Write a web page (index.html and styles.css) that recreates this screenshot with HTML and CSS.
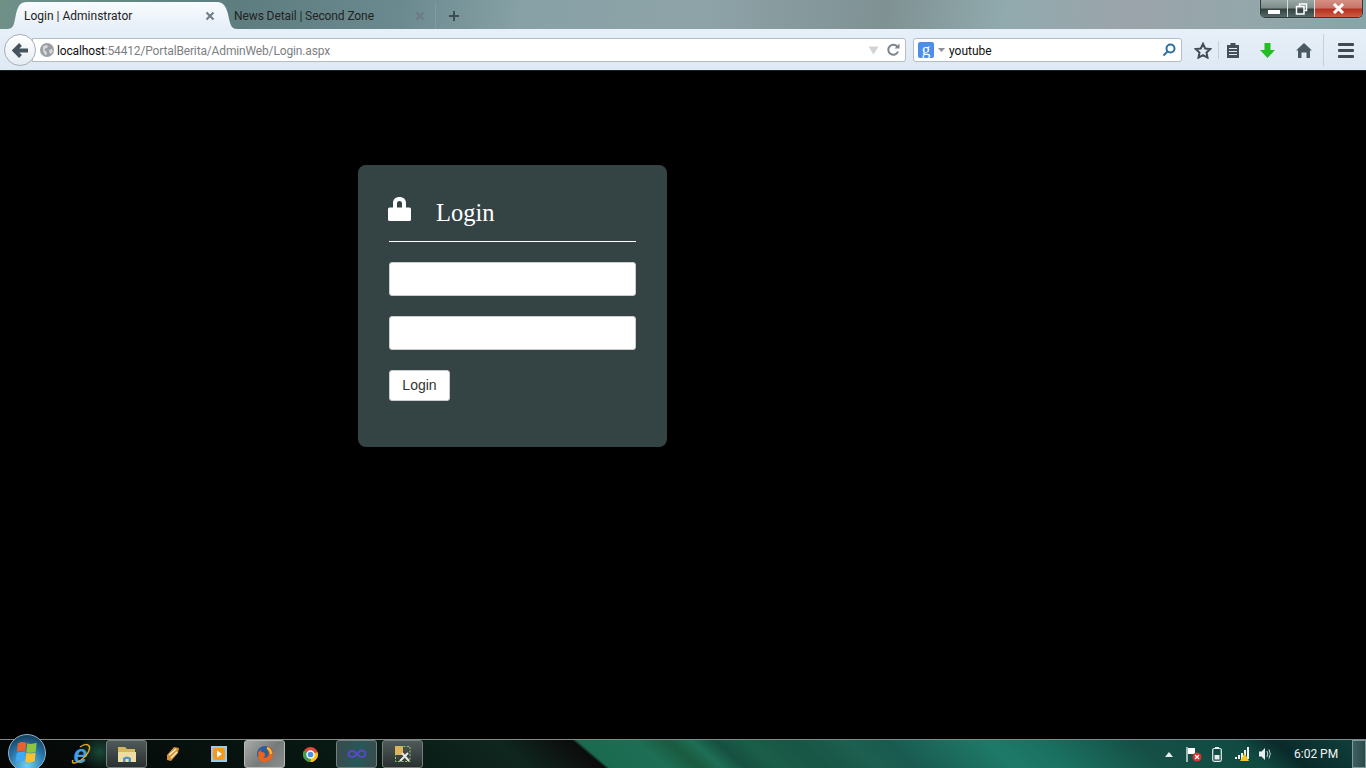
FILE: index.html
```html
<!DOCTYPE html>
<html lang="en">
<head>
  <meta charset="UTF-8" />
  <title>Login | Adminstrator</title>
  <link rel="stylesheet" href="styles.css">
</head>
<body>
<header class="titlebar">
  <div class="tab tab-active">
    <span class="tab-title">Login | Adminstrator</span>
    <svg class="tab-close" width="10" height="10" viewBox="0 0 10 10"><path d="M1.500 1.500l7 7M8.500 1.500l-7 7"/></svg>
  </div>
  <div class="tab tab-back">
    <span class="tab-title">News Detail | Second Zone</span>
    <svg class="tab-close" width="10" height="10" viewBox="0 0 10 10"><path d="M1.500 1.500l7 7M8.500 1.500l-7 7"/></svg>
  </div>
  <div class="new-tab">
    <svg width="12" height="12" viewBox="0 0 12 12"><path d="M6 1v10M1 6h10"/></svg>
  </div>
  <div class="window-controls">
    <div class="win-btn win-min"><span class="min-bar"></span></div>
    <div class="win-btn win-max">
      <svg width="13" height="12" viewBox="0 0 13 12"><path d="M4.500 3V1h7v6.500H9.500M1.500 3.500h7.500v7.500H1.500z"/></svg>
    </div>
    <div class="win-btn win-close">
      <svg width="13" height="11" viewBox="0 0 13 11"><path d="M2 1l9 9M11 1l-9 9"/></svg>
    </div>
  </div>
</header>

<nav class="navbar">
  <div class="back-btn">
    <svg width="17" height="15" viewBox="0 0 17 15"><path d="M8.500 1.500L2.500 7.500l6 6M3 7.500H16"/></svg>
  </div>
  <div class="urlbar">
    <svg class="globe" width="14" height="14" viewBox="0 0 14 14">
      <circle cx="7" cy="7" r="7" fill="#9b9fa3"/>
      <path d="M3 3.500l3-1.500 2 1-1 2-2 .5-.5 2 2 1 .5 3-2 .5-2-4zM9 7l3-1 1 2-2 3-1.500-1z" fill="#d5d8db"/>
    </svg>
    <span class="url-host">localhost</span><span class="url-rest">:54412/PortalBerita/AdminWeb/Login.aspx</span>
    <svg class="url-drop" width="11" height="9" viewBox="0 0 11 9"><path d="M.5.500h10L5.500 8.500z"/></svg>
    <svg class="url-reload" width="14" height="14" viewBox="0 0 14 14"><path d="M11.500 4A5 5 0 1 0 12 8.500"/><path class="fill" d="M8.500 5.500h5V.500z"/></svg>
  </div>
  <div class="searchbar">
    <span class="engine">g</span>
    <svg class="engine-caret" width="7" height="4" viewBox="0 0 7 4"><path d="M0 0h7L3.500 4z"/></svg>
    <span class="search-text">youtube</span>
    <svg class="search-go" width="14" height="14" viewBox="0 0 14 14"><circle cx="8.500" cy="5.500" r="4"/><path d="M5.500 8.500L1.500 12.500"/></svg>
  </div>
  <div class="toolbar">
    <svg class="tool-star" width="18" height="17" viewBox="0 0 18 17"><path d="M9 1.800l2.200 4.700 5 .6-3.700 3.500 1 5L9 13.100l-4.500 2.500 1-5L1.800 7.100l5-.6z"/></svg>
    <span class="tool-sep"></span>
    <svg class="tool-reader" width="14" height="16" viewBox="0 0 14 16"><path class="fill" d="M1 3h3.500V1h5v2H13v13H1z"/><path class="lines" d="M3 6.500h8M3 9.500h8M3 12.500h8"/></svg>
    <svg class="tool-arrow" width="15" height="15" viewBox="0 0 15 15"><path d="M4.500 0h6v7H15l-7.500 8L0 7h4.500z"/></svg>
    <svg class="tool-home" width="16" height="15" viewBox="0 0 16 15"><path d="M8 0l8 7.500h-2V15h-3.500V9.500h-5V15H2V7.500H0z"/></svg>
    <span class="tool-sep tool-sep-tall"></span>
    <div class="tool-menu"><span></span><span></span><span></span></div>
  </div>
</nav>

<main class="page">
  <section class="login-card">
    <div class="login-head">
      <svg class="lock" width="23" height="24" viewBox="0 0 23 24">
        <path d="M1.500 10.500H5V6C5 2 8 0 11.500 0S18 2 18 6v4.500h3.500A1.500 1.500 0 0 1 23 12v10.500a1.500 1.500 0 0 1-1.500 1.500h-20A1.500 1.500 0 0 1 0 22.500V12a1.500 1.500 0 0 1 1.500-1.500zM9 10.500h5V6.500C14 5 13 4 11.500 4S9 5 9 6.500z" fill-rule="evenodd"/>
      </svg>
      <h2>Login</h2>
    </div>
    <form class="login-form">
      <input type="text" />
      <input type="password" />
      <button type="button">Login</button>
    </form>
  </section>
</main>

<footer class="taskbar">
  <div class="start-orb">
    <svg width="22" height="25" viewBox="0 0 24 22" preserveAspectRatio="none">
      <path d="M2 3q4-2 9.200-.5L10.200 10Q5.500 8.500 1 10.500z" fill="#e8602c"/>
      <path d="M12.300 2.800q4 1.500 10.200-.3l-1 7.800q-5 1.800-10.100.2z" fill="#8cc63f"/>
      <path d="M.8 11.500q4.500-2 9.200-.5l-1 7.500q-4.500-1.500-9.200.5z" fill="#3fa9f5"/>
      <path d="M11.200 11.300q4.500 1.500 10.200-.3l-1 7.800q-5 1.800-10.200.2z" fill="#fbc02d"/>
    </svg>
  </div>
  <div class="task-items">
    <div class="task-item task-ie">
      <span class="ie-glyph">e</span>
      <svg class="ie-ring" width="22" height="22" viewBox="0 0 22 22"><path d="M3 17C1 21 5 21 11 17S21 6 19 3 13 2 10 4" fill="none" stroke="#e0a92c" stroke-width="1.500"/></svg>
    </div>
    <div class="task-item task-open">
      <svg width="20" height="18" viewBox="0 0 20 18">
        <path d="M1 2h7l2 2h8v13H1z" fill="#d8b85f"/>
        <path d="M1 7h18v10H1z" fill="#efdca0"/>
        <path d="M6 17v-4q4-3 8 0v4h-2.500v-3h-3v3z" fill="#4d94c9"/>
      </svg>
    </div>
    <div class="task-item">
      <svg width="16" height="16" viewBox="0 0 16 16">
        <path d="M2 9L9 1l5 1-1 5-7 8-4-1z" fill="#d5932f"/>
        <path d="M4 9l7-6M6 12l6-6" stroke="#f6e8c6" stroke-width="1.500"/>
      </svg>
    </div>
    <div class="task-item">
      <svg width="16" height="16" viewBox="0 0 16 16">
        <rect width="16" height="16" fill="#9ccbe8"/>
        <rect x="2" y="2" width="12" height="12" rx="2" fill="#f59a1e"/>
        <path d="M6 4.500l5 3.500-5 3.500z" fill="#fff"/>
      </svg>
    </div>
    <div class="task-item task-open task-active">
      <svg width="18" height="18" viewBox="0 0 18 18">
        <circle cx="9" cy="9" r="8" fill="#2b5c9e"/>
        <path d="M12 1q5 3 5 8a8 8 0 0 1-15 4q1-2 0-5l3-4q-1 3 1 3 3 0 3 3t-3 2q4 2 6-1 2-4-1-8z" fill="#e8651c"/>
        <path d="M11 3q4 2 4 6" stroke="#f8c02c" stroke-width="2" fill="none"/>
      </svg>
    </div>
    <div class="task-item">
      <svg width="15" height="15" viewBox="0 0 16 16">
        <circle cx="8" cy="8" r="8" fill="#de4a3a"/>
        <path d="M8 8L15.500 5.500A8 8 0 0 1 8 16z" fill="#f5c518"/>
        <path d="M8 8L8 16A8 8 0 0 1 1 4z" fill="#3f9e4a"/>
        <circle cx="8" cy="8" r="3.800" fill="#4a8fe0" stroke="#fff" stroke-width="1.500"/>
      </svg>
    </div>
    <div class="task-item task-open task-vs">
      <svg width="20" height="10" viewBox="0 0 20 10">
        <path d="M6 2C3 1.500 1.500 3.500 1.500 5S3 8.500 6 8s5-6 8-6.500 4.500 2 4.500 3.500S17 8.500 14 8 9 2.500 6 2z" fill="none" stroke="#5a48c0" stroke-width="2"/>
      </svg>
    </div>
    <div class="task-item task-open">
      <svg width="18" height="18" viewBox="0 0 18 18">
        <rect x="1" y="1" width="8" height="9" fill="#dcb55a"/>
        <path d="M6 1.500h10v15H1.500V8" fill="none" stroke="#8fce5a" stroke-dasharray="2 1.500"/>
        <path d="M6 16l8-8M8 8l7 8" stroke="#e8e8e8" stroke-width="2"/>
      </svg>
    </div>
  </div>
  <div class="tray">
    <svg class="tray-caret" width="8" height="5" viewBox="0 0 8 5"><path d="M4 0l4 5H0z"/></svg>
    <svg class="tray-flag" width="16" height="15" viewBox="0 0 16 15">
      <path d="M1 0v15" stroke="#fff" stroke-width="1.200"/>
      <path d="M2 1h7v6H2z" fill="#fff"/>
      <circle cx="11" cy="10" r="4.500" fill="#d8322f"/>
      <path d="M9 8l4 4M13 8l-4 4" stroke="#fff" stroke-width="1.200"/>
    </svg>
    <svg class="tray-battery" width="10" height="15" viewBox="0 0 10 15">
      <rect x=".7" y="1.500" width="8.600" height="12.800" rx="1.500" fill="none" stroke="#e8eeee" stroke-width="1.200"/>
      <rect x="3" y="0" width="4" height="1.500" fill="#e8eeee"/>
      <rect x="2.500" y="8" width="5" height="4.500" fill="#e8eeee"/>
    </svg>
    <svg class="tray-signal" width="16" height="14" viewBox="0 0 16 14">
      <path d="M1 10h2v2H1zM4 8h2v4H4zM7 6h2v6H7zM10 3h2v9h-2zM13 0h2v12h-2z" fill="#f2f2f2"/>
      <path d="M10.500 6l4.500 8H6z" fill="#f0c82c"/>
    </svg>
    <svg class="tray-speaker" width="14" height="14" viewBox="0 0 14 14">
      <path d="M1 4.500h2.500L7 1v12L3.500 9.500H1z" fill="#e8eeee"/>
      <path d="M9 4q1.500 3 0 6M11 2.500q2.500 4.500 0 9" fill="none" stroke="#c8d4d4"/>
    </svg>
    <span class="clock">6:02 PM</span>
    <div class="show-desktop"></div>
  </div>
</footer>
</body>
</html>
```

FILE: styles.css
```css
* {
  box-sizing: border-box;
}

html,
body {
  height: 100%;
}

body {
  margin: 0;
  display: flex;
  flex-direction: column;
  overflow: hidden;
  background-color: #000;
  font-family: "Roboto", "Open Sans", sans-serif;
  font-size: 12px;
}

svg {
  display: block;
  flex: none;
}

/* browser title bar + tabs */
.titlebar {
  position: relative;
  display: flex;
  align-items: flex-end;
  height: 29px;
  padding-left: 7px;
  background:
    linear-gradient(97deg, #6f9186 0, #6d8f88 14px, #5e7d80 240px, #6b8a90 400px, #87a1a6 520px, #8ea3a8 700px, #7f9193 880px, #91aaae 1000px, #9ba4aa 1120px, #93a7aa 1250px, #86a4a8 1366px);
}

.tab {
  display: flex;
  align-items: center;
  justify-content: space-between;
  height: 27px;
  color: #222;
}

.tab-active {
  width: 230px;
  margin-right: -20px;
  padding: 1px 22px 0 17px;
  background: linear-gradient(#f8fbfe, #e6eff8);
  clip-path: path("M0 27C7 27 7 22 9 12C11 4 13 0 20 0H210C216 0 219 4 221 12C223 22 224 27 230 27Z");
}

.tab-back {
  width: 218px;
  padding: 1px 10px 0 17px;
  letter-spacing: -0.1px;
}

.tab-close {
  fill: none;
  stroke: #6d7b85;
  stroke-width: 2;
}

.new-tab {
  display: flex;
  align-items: center;
  justify-content: center;
  width: 36px;
  height: 27px;
  border-left: 1px solid #7f9aa0;
  stroke: #3f4d55;
  stroke-width: 2;
  fill: none;
}

.window-controls {
  position: absolute;
  top: 0;
  right: 3px;
  display: flex;
  width: 103px;
  height: 18px;
  border: 1px solid #2c3a3c;
  border-top: none;
  border-radius: 0 0 5px 5px;
  overflow: hidden;
  box-shadow: 0 0 1px #dfe8e8;
}

.win-btn {
  display: flex;
  align-items: center;
  justify-content: center;
  height: 100%;
  width: 27px;
  border-right: 1px solid #d6dedd;
  background: linear-gradient(#99a7a5 0, #7e8d8b 45%, #32423f 55%, #55696a 100%);
}

.win-max {
  fill: none;
  stroke: #fff;
  stroke-width: 1.500;
}

.win-close {
  flex: 1;
  border-right: none;
  background: linear-gradient(#d58f82 0, #c7766a 45%, #b5321f 55%, #cf5b45 100%);
  fill: none;
  stroke: #fff;
  stroke-width: 3;
}

.min-bar {
  width: 12px;
  height: 4px;
  margin-top: 6px;
  background-color: #fff;
}

/* url bar row */
.navbar {
  position: relative;
  display: flex;
  align-items: center;
  height: 42px;
  padding: 1px 0 0 4px;
  background: linear-gradient(#e7f0f9, #dfe9f3);
  border-bottom: 1px solid #1d2226;
}

.back-btn {
  position: relative;
  z-index: 1;
  display: flex;
  align-items: center;
  justify-content: center;
  width: 32px;
  height: 32px;
  border: 1px solid #a5afb8;
  border-radius: 50%;
  background: linear-gradient(#ffffff, #e6edf4);
  fill: none;
  stroke: #45545f;
  stroke-width: 4;
}

.urlbar {
  display: flex;
  align-items: center;
  width: 874px;
  height: 24px;
  margin-left: -4px;
  padding: 0 5px 0 7px;
  border: 1px solid #b3bdc6;
  border-radius: 0 3px 3px 0;
  background-color: #fff;
  letter-spacing: -0.15px;
}

.globe {
  margin-right: 3px;
}

.url-host {
  padding-top: 1px;
  color: #111;
}

.url-rest {
  flex: 1;
  padding-top: 1px;
  color: #7c7f82;
}

.url-drop {
  margin-right: 7px;
  fill: #cfd4d9;
}

.url-reload {
  fill: none;
  stroke: #7d858c;
  stroke-width: 2;
}

.url-reload .fill {
  fill: #7d858c;
  stroke: none;
}

.searchbar {
  display: flex;
  align-items: center;
  width: 269px;
  height: 24px;
  margin-left: 7px;
  padding: 0 5px 0 4px;
  border: 1px solid #b3bdc6;
  border-radius: 3px;
  background-color: #fff;
}

.engine {
  display: flex;
  align-items: center;
  justify-content: center;
  width: 16px;
  height: 16px;
  border-radius: 2px;
  background-color: #4d8fe8;
  color: #fff;
  font-family: "Liberation Serif", serif;
  font-size: 17px;
  line-height: 14px;
}

.engine-caret {
  margin: 0 4px 0 4px;
  fill: #8a9096;
}

.search-text {
  flex: 1;
  padding-top: 1px;
  color: #111;
}

.search-go {
  fill: none;
  stroke: #2f6f9f;
  stroke-width: 2;
}

.toolbar {
  display: flex;
  align-items: center;
  flex: 1;
  height: 100%;
  padding-left: 12px;
}

.tool-star {
  fill: none;
  stroke: #3f4d58;
  stroke-width: 2;
}

.tool-sep {
  width: 1px;
  height: 18px;
  margin: 0 7px 0 6px;
  background-color: #c6d0d9;
}

.tool-sep-tall {
  height: 32px;
  margin: 0 14px 0 11px;
}

.tool-reader .fill {
  fill: #445059;
}

.tool-reader .lines {
  fill: none;
  stroke: #e4ecf3;
}

.tool-arrow {
  margin: 0 21px 0 20px;
  fill: #1fc01f;
}

.tool-home {
  fill: #4a5862;
}

.tool-menu {
  display: flex;
  flex-direction: column;
  gap: 3px;
  width: 16px;
}

.tool-menu span {
  height: 3px;
  border-radius: 1px;
  background-color: #3f4a53;
}

/* page */
.page {
  flex: 1;
  padding: 94px 0 0 358px;
  background-color: #000;
}

.login-card {
  width: 309px;
  height: 282px;
  padding: 31px 31px 0;
  border-radius: 8px;
  background-color: #344344;
}

.login-head {
  display: flex;
  align-items: flex-start;
  height: 46px;
  padding-top: 1px;
  border-bottom: 1px solid #fff;
}

.lock {
  margin-left: -1px;
  fill: #fff;
}

.login-head h2 {
  margin: 1px 0 0 25px;
  color: #fff;
  font-family: "Liberation Serif", serif;
  font-size: 24.500px;
  font-weight: normal;
  line-height: 30px;
}

.login-form {
  display: flex;
  flex-direction: column;
  align-items: flex-start;
  gap: 20px;
  margin-top: 20px;
}

.login-form input {
  display: block;
  width: 100%;
  height: 34px;
  border: 1px solid #ccc;
  border-radius: 3px;
  background-color: #fff;
}

.login-form button {
  width: 61px;
  height: 31px;
  padding: 0 0 2px;
  border: 1px solid #ccc;
  border-radius: 3px;
  background-color: #fff;
  color: #333;
  font-family: "Liberation Sans", Arial, sans-serif;
  font-size: 14px;
}

/* windows taskbar */
.taskbar {
  position: relative;
  display: flex;
  align-items: center;
  height: 29px;
  border-top: 1px solid #7f8c88;
  background:
    radial-gradient(ellipse 22px 20px at 100px 12px, rgba(40, 110, 85, 0.6), transparent),
    linear-gradient(40deg, #050505 0, #081a14 250px, #0f261f 340px, #0c0c0c 388px, #0d0d0d 389px, #1a6a50 392px, #1d6e54 430px, #1a5a40 450px, #1e6e55 465px, #165040 480px, #1a5e48 500px, #185545 530px, #1d5f50 565px, #1a5a50 590px, #1c6a5c 620px, #1e7a68 655px, #1a7060 690px, #154f45 750px, #104a40 815px, #0a2a2a 840px, #0f3e3a 890px);
}

.start-orb {
  position: absolute;
  left: 8px;
  bottom: -4px;
  display: flex;
  align-items: center;
  justify-content: center;
  width: 38px;
  height: 38px;
  padding-bottom: 2px;
  border: 1px solid #8fb7cf;
  border-radius: 50%;
  background: radial-gradient(circle at 50% 85%, #6fd0ee, #2a78ad 50%, #15405f 85%);
}

.task-items {
  display: flex;
  align-items: center;
  gap: 5px;
  margin-left: 60px;
  height: 100%;
}

.task-item {
  position: relative;
  display: flex;
  align-items: center;
  justify-content: center;
  width: 41px;
  height: 28px;
}

.task-open {
  border: 1px solid #75807e;
  border-radius: 3px;
  background: linear-gradient(#50595a, #2a3030);
}

.task-active {
  background: linear-gradient(135deg, #a8abaa, #767a7a 55%, #8a8e8d);
  border-color: #b5b9b8;
}

.task-vs {
  background: linear-gradient(100deg, #3b4a4c, #27585a 55%, #3a4a4a);
}

.ie-glyph {
  color: #3f9fe0;
  font-family: "Liberation Sans", sans-serif;
  font-size: 25px;
  font-style: italic;
  font-weight: bold;
  line-height: 24px;
}

.ie-ring {
  position: absolute;
  top: 3px;
  left: 10px;
}

.tray {
  display: flex;
  align-items: center;
  margin-left: auto;
  height: 100%;
}

.tray-caret {
  margin-right: 13px;
  fill: #e8eeee;
}

.tray-battery {
  margin-left: 10px;
}

.tray-signal {
  margin-left: 12px;
}

.tray-speaker {
  margin-left: 8px;
}

.clock {
  width: 44px;
  margin-left: 22px;
  color: #f0f4f4;
  white-space: nowrap;
}

.show-desktop {
  width: 14px;
  height: 100%;
  margin-left: 14px;
  border: 1px solid #7f9a9a;
  background: linear-gradient(90deg, #3f6060, #2a4a4a);
}
```
